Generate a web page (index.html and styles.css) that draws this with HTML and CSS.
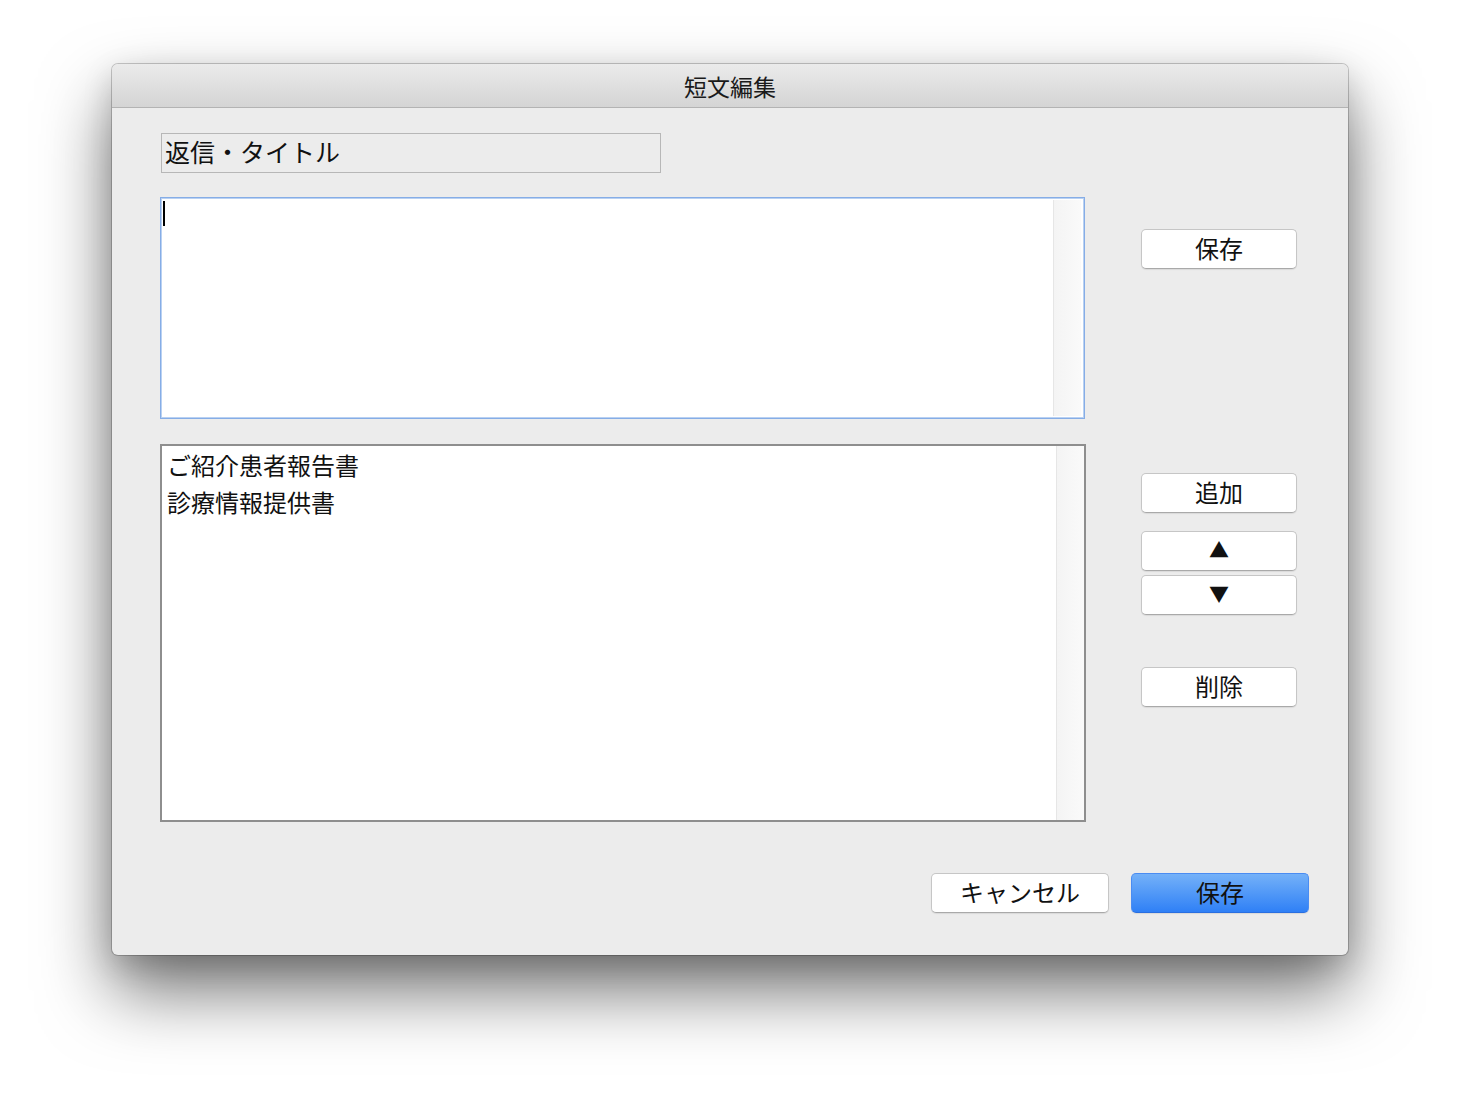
FILE: index.html
```html
<!DOCTYPE html>
<html lang="ja">
<head>
    <meta charset="UTF-8">
    <meta name="viewport" content="width=device-width, initial-scale=1.0">
    <title>短文編集</title>
    <link rel="stylesheet" href="styles.css">
</head>
<body>

<div class="ventana">
    <div class="barraTitulo">短文編集</div>

    <div class="contenido">
        <div class="fila">
            <div class="colIzq">
                <div class="campoTitulo">返信・タイトル</div>

                <div class="areaTexto">
                    <div class="areaInterior"><span class="cursor"></span></div>
                    <div class="pista"></div>
                </div>

                <div class="lista">
                    <div class="listaItems">
                        <div class="item">ご紹介患者報告書</div>
                        <div class="item">診療情報提供書</div>
                    </div>
                    <div class="pista"></div>
                </div>
            </div>

            <div class="colDer">
                <button class="btn btnGuardar">保存</button>
                <button class="btn btnAgregar">追加</button>
                <button class="btn btnArriba">▲</button>
                <button class="btn btnAbajo">▼</button>
                <button class="btn btnBorrar">削除</button>
            </div>
        </div>

        <div class="pie">
            <button class="btn btnAncho">キャンセル</button>
            <button class="btn btnAncho btnAzul">保存</button>
        </div>
    </div>
</div>

</body>
</html>
```

FILE: styles.css
```css
*{margin: 0; padding: 0; box-sizing: border-box;}

html, body{
    height: 100%;
}
body{
    background: #fff;
    padding: 64px 0 0 112px;
    font-family: "Noto Sans CJK JP", "Noto Sans", sans-serif;
    color: #111;
}
.ventana{
    width: 1236px;
    height: 891px;
    background: #ececec;
    border-radius: 6px;
    box-shadow: 0 0 0 1px rgba(0,0,0,0.2), 0 36px 70px rgba(0,0,0,0.55), 0 10px 30px rgba(0,0,0,0.15);
    overflow: hidden;
}
.barraTitulo{
    height: 44px;
    background: linear-gradient(#ebebeb, #d4d4d4);
    border-bottom: 1px solid #b3b3b3;
    text-align: center;
    font-size: 23px;
    line-height: 44px;
    color: #1a1a1a;
}
.contenido{
    padding: 25px 39px 0 49px;
}
.fila{
    display: flex;
    gap: 55px;
}
.colIzq{
    width: 925px;
    display: flex;
    flex-direction: column;
}
.campoTitulo{
    width: 500px;
    height: 40px;
    border: 1px solid #b7b7b7;
    background: #ececec;
    font-size: 25px;
    line-height: 35px;
    padding-left: 3px;
}
.areaTexto{
    margin-top: 24px;
    margin-left: -1px;
    width: 925px;
    height: 222px;
    background: #fff;
    border: 1px solid #86ade6;
    box-shadow: inset 0 0 0 1px #b9d1f2;
    display: flex;
    padding: 2px 3px 2px 2px;
}
.areaInterior{
    flex: 1;
}
.cursor{
    display: block;
    width: 2px;
    height: 25px;
    background: #000;
    margin: 1px 0 0 0;
}
.pista{
    width: 28px;
    background: linear-gradient(90deg, #f4f4f4, #fafafa);
    border-left: 1px solid #e6e6e6;
}
.lista{
    margin-top: 25px;
    margin-left: -1px;
    width: 926px;
    height: 378px;
    background: #fff;
    border: 2px solid #8e8e8e;
    display: flex;
}
.listaItems{
    flex: 1;
    padding: 0 0 0 5px;
}
.item{
    font-size: 24px;
    line-height: 37px;
}
.colDer{
    width: 156px;
    display: flex;
    flex-direction: column;
}
.btn{
    width: 156px;
    height: 40px;
    background: #fff;
    border: 1px solid #c6c6c6;
    border-bottom-color: #a9a9a9;
    border-radius: 5px;
    box-shadow: 0 1px 1px rgba(0,0,0,0.08);
    font-family: "Noto Sans CJK JP", "Noto Sans", sans-serif;
    font-size: 24px;
    color: #111;
    line-height: 34px;
    padding-bottom: 3px;
}
.btnGuardar{ margin-top: 96px; }
.btnAgregar{ margin-top: 204px; }
.btnArriba{ margin-top: 18px; font-size: 20px; }
.btnAbajo{ margin-top: 4px; font-size: 20px; }
.btnBorrar{ margin-top: 52px; }

.pie{
    display: flex;
    justify-content: flex-end;
    gap: 22px;
    margin-top: 51px;
}
.btnAncho{
    width: 178px;
}
.btnAzul{
    background: linear-gradient(#74b1f8, #2f80f6);
    border: 1px solid #4a8cf2;
    border-bottom-color: #2a6fe0;
}
```
